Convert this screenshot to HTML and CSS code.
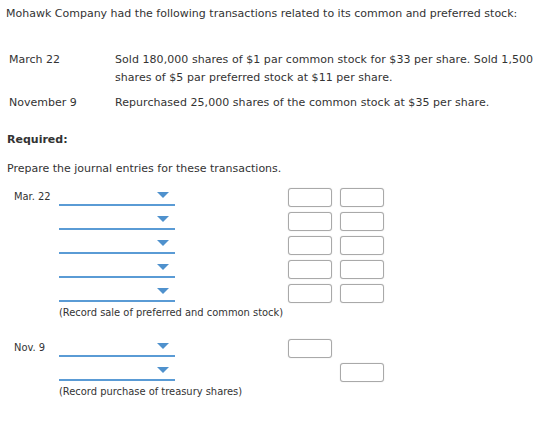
FILE: index.html
```html
<!DOCTYPE html>
<html>
<head>
<meta charset="utf-8">
<link rel="stylesheet" href="styles.css">
</head>
<body>
<div class="page">
  <p class="intro">Mohawk Company had the following transactions related to its common and preferred stock:</p>

  <div class="txns">
    <div class="txn-date">March 22</div>
    <div class="txn-desc">Sold 180,000 shares of $1 par common stock for $33 per share. Sold 1,500 shares of $5 par preferred stock at $11 per share.</div>
    <div class="txn-date">November 9</div>
    <div class="txn-desc">Repurchased 25,000 shares of the common stock at $35 per share.</div>
  </div>

  <div class="required">Required:</div>
  <p class="instr">Prepare the journal entries for these transactions.</p>

  <div class="entry">
    <div class="row">
      <div class="date">Mar. 22</div>
      <div class="select"><span class="arrow"></span></div>
      <div class="amt debit"></div>
      <div class="amt credit"></div>
    </div>
    <div class="row">
      <div class="date"></div>
      <div class="select"><span class="arrow"></span></div>
      <div class="amt debit"></div>
      <div class="amt credit"></div>
    </div>
    <div class="row">
      <div class="date"></div>
      <div class="select"><span class="arrow"></span></div>
      <div class="amt debit"></div>
      <div class="amt credit"></div>
    </div>
    <div class="row">
      <div class="date"></div>
      <div class="select"><span class="arrow"></span></div>
      <div class="amt debit"></div>
      <div class="amt credit"></div>
    </div>
    <div class="row">
      <div class="date"></div>
      <div class="select"><span class="arrow"></span></div>
      <div class="amt debit"></div>
      <div class="amt credit"></div>
    </div>
    <div class="note">(Record sale of preferred and common stock)</div>
  </div>

  <div class="entry entry-2">
    <div class="row">
      <div class="date">Nov. 9</div>
      <div class="select"><span class="arrow"></span></div>
      <div class="amt debit"></div>
      <div class="amt credit empty"></div>
    </div>
    <div class="row">
      <div class="date"></div>
      <div class="select"><span class="arrow"></span></div>
      <div class="amt debit empty"></div>
      <div class="amt credit"></div>
    </div>
    <div class="note">(Record purchase of treasury shares)</div>
  </div>
</div>
</body>
</html>
```

FILE: styles.css
```css
html, body {
  margin: 0;
  padding: 0;
  background: #fff;
}

.page {
  font-family: "DejaVu Sans", Verdana, sans-serif;
  font-size: 11px;
  color: #333;
  padding: 6px 0 0 6px;
}

p {
  margin: 0;
}

.intro {
  line-height: 15px;
}

.txns {
  display: grid;
  grid-template-columns: 106px 1fr;
  row-gap: 7px;
  margin: 30px 0 0 3px;
  line-height: 18px;
}

.txn-desc {
  letter-spacing: 0.05px;
}

.required {
  font-weight: bold;
  margin: 20px 0 0 1px;
  line-height: 15px;
}

.instr {
  margin: 14px 0 0 1px;
  line-height: 15px;
}

/* journal entry grid: date, account select, debit, credit */
.entry {
  margin: 6px 0 0 8px;
  font-family: "DejaVu Sans Condensed", "DejaVu Sans", Tahoma, sans-serif;
}

.entry-2 {
  margin-top: 13px;
}

.row {
  display: flex;
  align-items: flex-end;
  height: 24px;
}

.date {
  width: 45px;
  line-height: 15px;
  padding-bottom: 2px;
  margin-top: -1px;
}

.select {
  position: relative;
  width: 116px;
  height: 20px;
  border-bottom: 2px solid #5a9bd5;
  box-sizing: border-box;
}

.arrow {
  position: absolute;
  right: 6px;
  top: 6px;
  width: 0;
  height: 0;
  border-left: 6px solid transparent;
  border-right: 6px solid transparent;
  border-top: 6px solid #4f91cd;
}

.amt {
  width: 44px;
  height: 19px;
  box-sizing: border-box;
  border: 1px solid #a9a9a9;
  border-radius: 3px;
  box-shadow: 0 0 1px rgba(0, 0, 0, 0.25);
  background: #fff;
  margin-bottom: -1px;
}

.debit {
  margin-left: 113px;
}

.credit {
  margin-left: 8px;
}

.amt.empty {
  visibility: hidden;
}

.note {
  margin: 3px 0 0 45px;
  line-height: 15px;
}
```
